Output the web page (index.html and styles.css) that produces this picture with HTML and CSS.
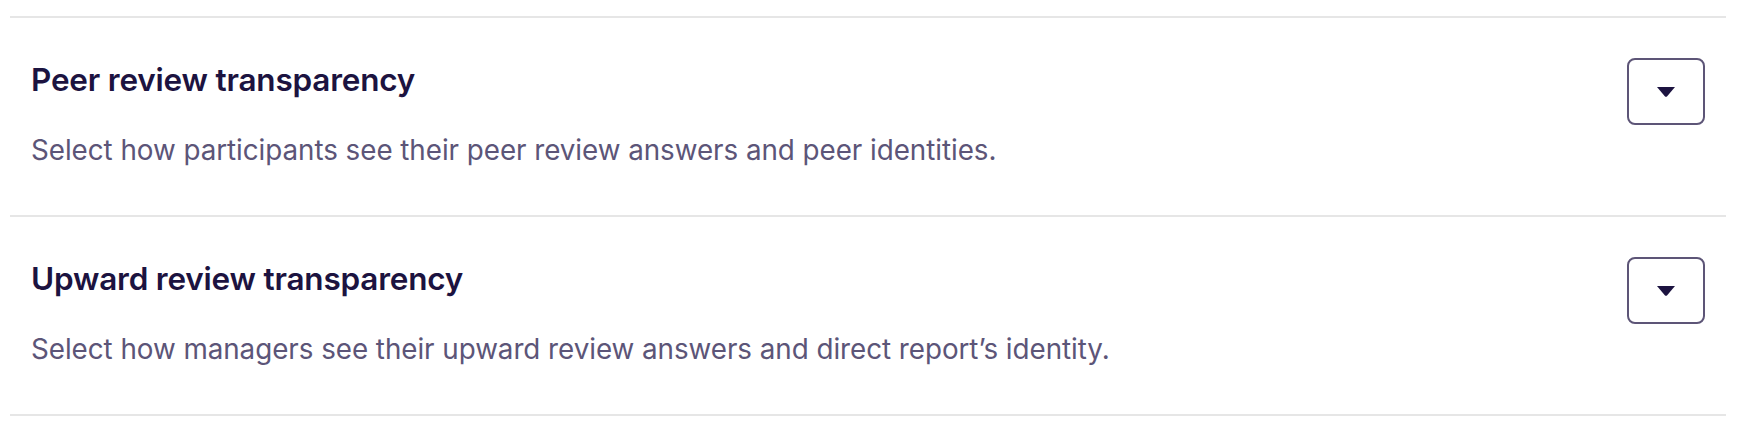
FILE: index.html
```html
<!DOCTYPE html>
<html lang="en">

<head>
    <meta charset="UTF-8">
    <meta name="viewport" content="width=device-width, initial-scale=1.0">
    <title>Review transparency</title>
    <link rel="stylesheet" href="styles.css">
</head>

<body>

    <div class="Ajustes">

        <div class="Fila">
            <div class="Texto">
                <h3>Peer review transparency</h3>
                <p>Select how participants see their peer review answers and peer identities.</p>
            </div>
            <button type="button" class="Desplegar" aria-label="Open">
                <svg width="18" height="10" viewBox="0 0 18 10">
                    <path d="M0 0 H18 L10.2 9.3 Q9 10.4 7.8 9.3 Z" fill="#1c1340" />
                </svg>
            </button>
        </div>

        <div class="Fila">
            <div class="Texto">
                <h3>Upward review transparency</h3>
                <p>Select how managers see their upward review answers and direct report’s identity.</p>
            </div>
            <button type="button" class="Desplegar" aria-label="Open">
                <svg width="18" height="10" viewBox="0 0 18 10">
                    <path d="M0 0 H18 L10.2 9.3 Q9 10.4 7.8 9.3 Z" fill="#1c1340" />
                </svg>
            </button>
        </div>

    </div>

</body>

</html>
```

FILE: styles.css
```css
body {
    font-family: 'Inter', sans-serif;
    background-color: #fff;
    margin: 0;
    padding-top: 16px;
}


.Ajustes {
    margin: 0 14px 0 10px;
    border-bottom: 2px solid #e6e6e6;
}


.Fila {
    display: flex;
    justify-content: space-between;
    align-items: flex-start;
    border-top: 2px solid #e6e6e6;
    padding: 40px 21px 0 21px;
    height: 157px;
}


h3 {
    margin: 0;
    font-size: 31.5px;
    font-weight: 600;
    line-height: 44px;
    color: #1c1340;
    letter-spacing: -0.2px;
}


p {
    margin: 31px 0 0 0;
    font-size: 27.8px;
    line-height: 34px;
    color: #5c5578;
    letter-spacing: -0.05px;
}


.Desplegar {
    width: 78px;
    height: 67px;
    border: 2px solid #5d5577;
    border-radius: 8px;
    background-color: #fff;
    display: flex;
    justify-content: center;
    align-items: center;
    padding: 0;
    cursor: pointer;
}
```
